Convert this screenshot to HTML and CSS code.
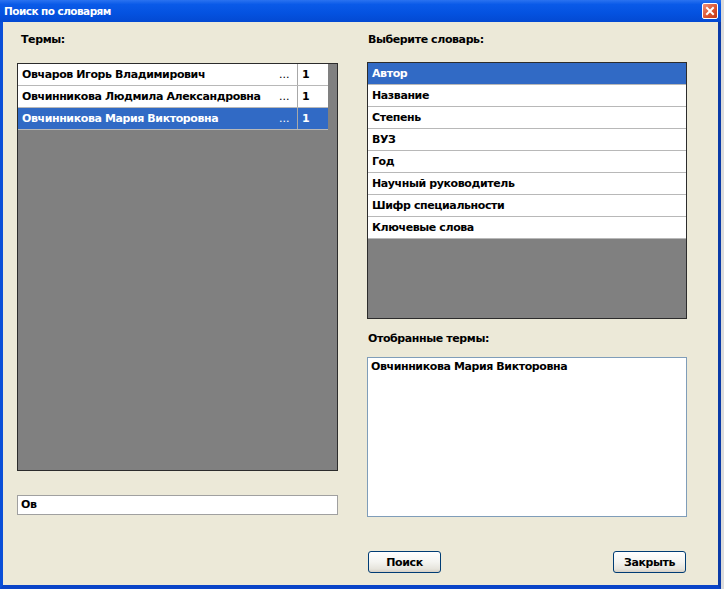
FILE: index.html
```html
<!DOCTYPE html>
<html lang="ru">
<head>
<meta charset="utf-8">
<title>Поиск по словарям</title>
<link rel="stylesheet" href="styles.css">
</head>
<body>
<div class="window">
  <div class="titlebar">
    <span class="title">Поиск по словарям</span>
    <span class="close">
      <svg width="14" height="14" viewBox="0 0 14 14">
        <path d="M4 4 L10 10 M10 4 L4 10" stroke="#fff" stroke-width="2" stroke-linecap="square"/>
      </svg>
    </span>
  </div>
  <div class="client">
    <div class="col col-left">
      <div class="label">Термы:</div>
      <div class="list terms">
        <div class="trow"><span class="tname">Овчаров Игорь Владимирович</span><span class="dots">...</span><span class="tnum">1</span></div>
        <div class="trow"><span class="tname">Овчинникова Людмила Александровна</span><span class="dots">...</span><span class="tnum">1</span></div>
        <div class="trow selected"><span class="tname">Овчинникова Мария Викторовна</span><span class="dots">...</span><span class="tnum">1</span></div>
      </div>
      <div class="input">Ов</div>
    </div>
    <div class="col col-right">
      <div class="label">Выберите словарь:</div>
      <div class="list dicts">
        <div class="drow selected">Автор</div>
        <div class="drow">Название</div>
        <div class="drow">Степень</div>
        <div class="drow">ВУЗ</div>
        <div class="drow">Год</div>
        <div class="drow">Научный руководитель</div>
        <div class="drow">Шифр специальности</div>
        <div class="drow">Ключевые слова</div>
      </div>
      <div class="label label2">Отобранные термы:</div>
      <div class="textarea">Овчинникова Мария Викторовна</div>
      <div class="buttons">
        <button class="btn">Поиск</button>
        <button class="btn">Закрыть</button>
      </div>
    </div>
  </div>
</div>
</body>
</html>
```
FILE: styles.css
```css
html, body {
  margin: 0;
  padding: 0;
  background: #dcdcdc;
}
body {
  width: 724px;
  height: 589px;
  overflow: hidden;
  font-family: "DejaVu Sans", "Liberation Sans", sans-serif;
  font-size: 11px;
  font-weight: bold;
  letter-spacing: -0.4px;
  color: #000;
}
.window {
  width: 721px;
  height: 589px;
  display: flex;
  flex-direction: column;
}
.titlebar {
  height: 22px;
  background: linear-gradient(#2a72f0 0%, #0a5ae8 20%, #0452e0 60%, #0349d2 100%);
  display: flex;
  align-items: center;
  justify-content: space-between;
  padding: 0 3px 0 4px;
  color: #fff;
}
.title {
  font-size: 10.5px;
  letter-spacing: -0.55px;
}
.close {
  width: 14px;
  height: 14px;
  border: 1px solid #fff;
  border-radius: 2px;
  background: linear-gradient(135deg, #f0907a, #d8502c 60%, #c03818);
  display: flex;
}
.client {
  flex: 1;
  background: #ece9d8;
  border-left: 3px solid #0a4fd8;
  border-right: 3px solid #0a3aa8;
  border-bottom: 4px solid #0a44c8;
  display: flex;
  padding: 11px 0 0 14px;
  gap: 29px;
}
.col {
  display: flex;
  flex-direction: column;
}
.col-left { width: 321px; }
.col-right { width: 320px; }
.label {
  height: 14px;
  line-height: 14px;
  padding-left: 4px;
}
.col-right .label { padding-left: 1px; }
.list {
  background: #808080;
  border: 1px solid #2c2c2c;
  box-sizing: border-box;
}
.terms {
  margin-top: 16px;
  height: 408px;
}
.trow {
  display: flex;
  width: 310px;
  height: 22px;
  line-height: 21px;
  background: #fff;
  border-bottom: 1px solid #b8b8b8;
  box-sizing: border-box;
}
.trow .tname {
  flex: 1;
  padding-left: 4px;
  white-space: nowrap;
  overflow: hidden;
}
.trow .dots {
  width: 18px;
  font-weight: normal;
  letter-spacing: 0;
}
.trow .tnum {
  width: 26px;
  padding-left: 4px;
  border-left: 1px solid #a8a8a8;
}
.trow.selected, .drow.selected {
  background: #316ac5;
  color: #fff;
}
.input {
  margin-top: 24px;
  height: 20px;
  box-sizing: border-box;
  border: 1px solid #a0a0a0;
  background: #fff;
  line-height: 18px;
  padding-left: 3px;
}
.dicts {
  margin-top: 15px;
  height: 257px;
}
.drow {
  height: 22px;
  line-height: 21px;
  background: #fff;
  border-bottom: 1px solid #b8b8b8;
  box-sizing: border-box;
  padding-left: 4px;
}
.label2 {
  margin-top: 13px;
}
.textarea {
  margin-top: 11px;
  height: 160px;
  box-sizing: border-box;
  border: 1px solid #7f9db9;
  background: #fff;
  padding: 2px 3px;
  line-height: 14px;
}
.buttons {
  margin-top: 34px;
  display: flex;
  justify-content: space-between;
  padding-left: 1px;
  padding-right: 1px;
}
.btn {
  width: 73px;
  height: 22px;
  font: inherit;
  letter-spacing: inherit;
  color: #000;
  border: 1px solid #003c74;
  border-radius: 3px;
  background: linear-gradient(#ffffff 0%, #f4f4f0 50%, #e6e4dc 85%, #d6d0c5 100%);
  padding: 0;
}
```
